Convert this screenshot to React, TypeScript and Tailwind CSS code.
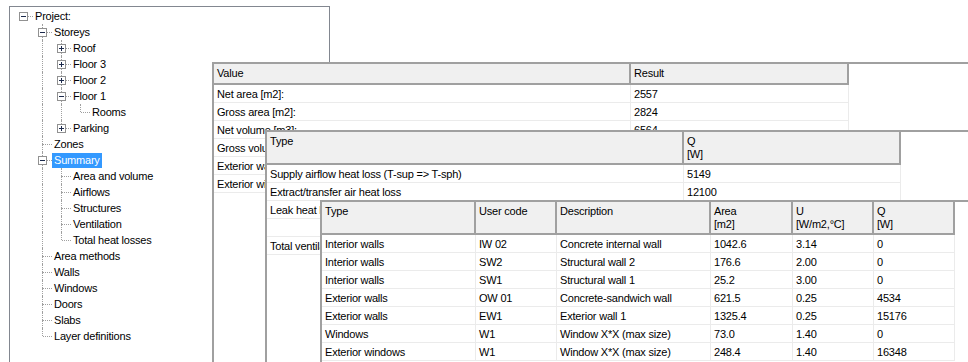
import type { ReactNode } from "react";

type TreeNode = {
  label: string;
  children?: TreeNode[];
  collapsed?: boolean;
  selected?: boolean;
};

const tree: TreeNode = {
  label: "Project:",
  children: [
    {
      label: "Storeys",
      children: [
        { label: "Roof", collapsed: true },
        { label: "Floor 3", collapsed: true },
        { label: "Floor 2", collapsed: true },
        { label: "Floor 1", children: [{ label: "Rooms" }] },
        { label: "Parking", collapsed: true },
      ],
    },
    { label: "Zones" },
    {
      label: "Summary",
      selected: true,
      children: [
        { label: "Area and volume" },
        { label: "Airflows" },
        { label: "Structures" },
        { label: "Ventilation" },
        { label: "Total heat losses" },
      ],
    },
    { label: "Area methods" },
    { label: "Walls" },
    { label: "Windows" },
    { label: "Doors" },
    { label: "Slabs" },
    { label: "Layer definitions" },
  ],
};

type FlatRow = {
  node: TreeNode;
  depth: number;
  hasNext: boolean;
  guides: boolean[];
};

function flatten(node: TreeNode, depth: number, hasNext: boolean, guides: boolean[], out: FlatRow[]) {
  out.push({ node, depth, hasNext, guides });
  const kids = node.children ?? [];
  kids.forEach((k, i) =>
    flatten(k, depth + 1, i < kids.length - 1, depth === 0 ? [] : [...guides, hasNext], out),
  );
  return out;
}

function Dots({ className }: { className: string }) {
  return <span className={`absolute border-dotted border-[#a0a0a0] ${className}`} />;
}

function TreeRow({ row }: { row: FlatRow }) {
  const { node, depth, hasNext, guides } = row;
  const expandable = !!node.children || node.collapsed;
  // root has no sibling line, so its children's columns start one step in
  const pad = depth > 0 ? [false, ...guides] : [];
  return (
    <div className="flex h-4 items-center">
      {pad.map((g, i) => (
        <span key={i} className="relative h-4 w-[19px] shrink-0">
          {g && <Dots className="left-[9px] top-0 h-4 border-l" />}
        </span>
      ))}
      <span className="relative h-4 w-[19px] shrink-0">
        {depth > 0 && <Dots className="left-[9px] top-0 h-2 border-l" />}
        {hasNext && <Dots className="left-[9px] top-2 h-2 border-l" />}
        <Dots className="left-[10px] top-[8px] w-[9px] border-t" />
        {expandable && (
          <span className="absolute left-[5px] top-[4px] flex size-[9px] items-center justify-center border border-[#919191] bg-white">
            <span className="absolute h-px w-[5px] bg-[#1c2a4c]" />
            {node.collapsed && <span className="absolute h-[5px] w-px bg-[#1c2a4c]" />}
          </span>
        )}
      </span>
      <span
        className={`h-[15px] whitespace-nowrap px-0.5 leading-[15px] ${
          node.selected ? "bg-[#3399ff] text-white" : "text-black"
        }`}
      >
        {node.label}
      </span>
    </div>
  );
}

function Table({
  pos,
  cols,
  headerH,
  headers,
  rows,
}: {
  pos: string;
  cols: string;
  headerH: string;
  headers: string[][];
  rows: string[][];
}) {
  return (
    <div className={`absolute border-l-2 border-t-2 border-[#a0a0a0] bg-white ${pos}`}>
      <div className={`grid ${cols}`}>
        {headers.map((h, i) => (
          <div
            key={i}
            className={`${headerH} overflow-hidden whitespace-nowrap border-b-2 border-r-2 border-[#a0a0a0] bg-[#f0f0f0] pl-[3px] pt-[3px] leading-[13px]`}
          >
            {h.map((l, j) => (
              <div key={j}>{l}</div>
            ))}
          </div>
        ))}
        {rows.map((r, i) => r.map((c, j) => <Cell key={`${i}-${j}`}>{c}</Cell>))}
      </div>
    </div>
  );
}

function Cell({ children }: { children: ReactNode }) {
  return (
    <div className="h-[18px] overflow-hidden whitespace-nowrap border-b border-r border-[#ebebeb] pl-[3px] leading-[18px]">
      {children}
    </div>
  );
}

const summaryRows = [
  ["Net area [m2]:", "2557"],
  ["Gross area [m2]:", "2824"],
  ["Net volume [m3]:", "6564"],
  ["Gross volume [m3]:", ""],
  ["Exterior walls area [m2]:", ""],
  ["Exterior windows area [m2]:", ""],
];

const ventRows = [
  ["Supply airflow heat loss (T-sup => T-sph)", "5149"],
  ["Extract/transfer air heat loss", "12100"],
  ["Leak heat loss", ""],
  ["", ""],
  ["Total ventilation heat loss", ""],
];

const structRows = [
  ["Interior walls", "IW 02", "Concrete internal wall", "1042.6", "3.14", "0"],
  ["Interior walls", "SW2", "Structural wall 2", "176.6", "2.00", "0"],
  ["Interior walls", "SW1", "Structural wall 1", "25.2", "3.00", "0"],
  ["Exterior walls", "OW 01", "Concrete-sandwich wall", "621.5", "0.25", "4534"],
  ["Exterior walls", "EW1", "Exterior wall 1", "1325.4", "0.25", "15176"],
  ["Windows", "W1", "Window X*X (max size)", "73.0", "1.40", "0"],
  ["Exterior windows", "W1", "Window X*X (max size)", "248.4", "1.40", "16348"],
];

export default function App() {
  const rows = flatten(tree, 0, false, [], []);
  return (
    <div className="relative h-[362px] w-[968px] overflow-hidden bg-white font-['Liberation_Sans',Arial,sans-serif] text-[11px] tracking-[-0.2px] text-black">
      <div className="absolute left-[9px] top-[6px] h-[400px] w-[321px] border border-[#828790] bg-white pl-1 pt-px">
        {rows.map((r, i) => (
          <TreeRow key={i} row={r} />
        ))}
      </div>

      <Table
        pos="left-[212px] top-[62px] h-[300px] w-[756px]"
        cols="grid-cols-[417px_218px]"
        headerH="h-[21px]"
        headers={[["Value"], ["Result"]]}
        rows={summaryRows}
      />

      <Table
        pos="left-[265px] top-[130px] h-[232px] w-[703px]"
        cols="grid-cols-[417px_217px]"
        headerH="h-[33px]"
        headers={[["Type"], ["Q", "[W]"]]}
        rows={ventRows}
      />

      <Table
        pos="left-[320px] top-[200px] h-[162px] w-[648px]"
        cols="grid-cols-[154px_81px_154px_82px_81px_81px]"
        headerH="h-[33px]"
        headers={[
          ["Type"],
          ["User code"],
          ["Description"],
          ["Area", "[m2]"],
          ["U", "[W/m2,°C]"],
          ["Q", "[W]"],
        ]}
        rows={structRows}
      />
    </div>
  );
}
